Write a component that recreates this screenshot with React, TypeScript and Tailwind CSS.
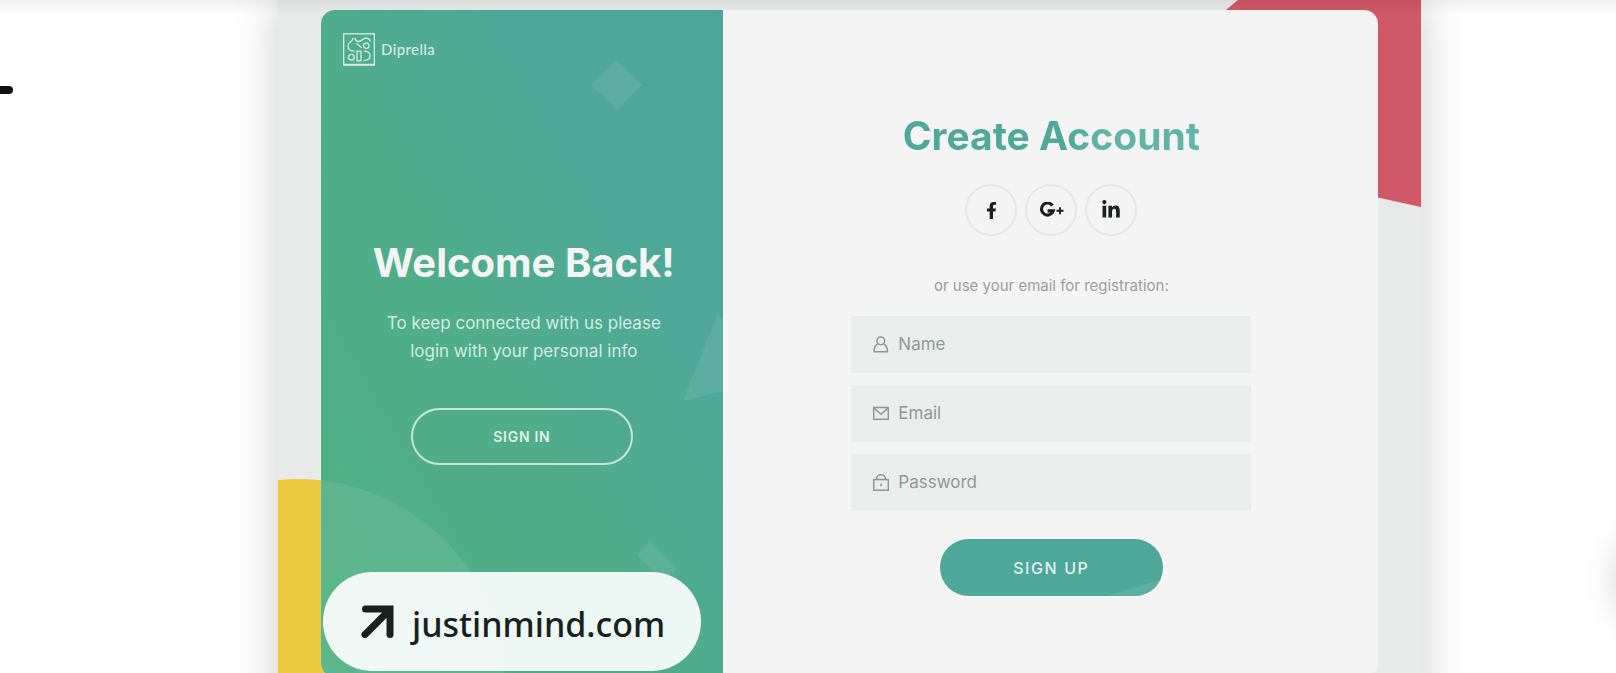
import type { ReactNode } from "react";
import { FaFacebookF, FaLinkedinIn } from "react-icons/fa";

function LogoMark() {
  return (
    <svg viewBox="0 0 96 98" className="h-[33px] w-8" fill="none" stroke="#d3ece2" strokeWidth="4" aria-hidden="true">
      <rect x="2" y="2" width="92" height="94" />
      <path d="M2 94H94" strokeWidth="5" />
      <path d="M30 14C31 26 16 25 15 38C14 50 24 54 35 54" />
      <path d="M36 14C38 28 51 27 58 20C66 12 80 12 82 25" />
      <path d="M40 30L56 44" />
      <circle cx="70" cy="38" r="8" />
      <circle cx="25" cy="72" r="8.5" />
      <rect x="42" y="54" width="12" height="29" />
      <path d="M62 54C88 52 88 84 62 82" />
    </svg>
  );
}

function GooglePlusIcon() {
  return (
    <svg viewBox="0 0 25 16" className="h-4 w-[25px]" fill="none" stroke="#1b211f" aria-hidden="true">
      <path d="M13.4 3.6A6 6 0 1 0 14.2 8.9H8.6" strokeWidth="3.1" />
      <path d="M17.5 8.8H24.5M21 5.3V12.3" strokeWidth="1.9" />
    </svg>
  );
}

function UserIcon() {
  return (
    <svg viewBox="0 0 16 18" className="h-[18px] w-4" fill="none" stroke="#8f9693" strokeWidth="1.5" aria-hidden="true">
      <circle cx="7.8" cy="4.8" r="3.9" />
      <path d="M5 7.800C2.2 9.200 1 11.600 1 15.700H14.500C14.500 11.600 13.300 9.200 10.600 7.800" strokeLinejoin="round" />
    </svg>
  );
}

function MailIcon() {
  return (
    <svg viewBox="0 0 16 18" className="h-[18px] w-4" fill="none" stroke="#8f9693" strokeWidth="1.5" aria-hidden="true">
      <rect x="0.700" y="2.500" width="14.600" height="11.800" />
      <path d="M1 3.100L8 9.300L15 3.100" />
    </svg>
  );
}

function LockIcon() {
  return (
    <svg viewBox="0 0 16 18" className="h-[18px] w-4" fill="none" stroke="#8f9693" strokeWidth="1.5" aria-hidden="true">
      <rect x="0.700" y="5.600" width="14.600" height="10.600" />
      <path d="M3.500 5.600V5A4.500 4.200 0 0 1 12.500 5V5.600" />
      <path d="M8 9.500V12.200" />
    </svg>
  );
}

function SocialButton({ label, children }: { label: string; children: ReactNode }) {
  return (
    <button
      type="button"
      aria-label={label}
      className="flex size-[52px] items-center justify-center rounded-full border-2 border-[#e3e7e5] text-[#1b211f]"
    >
      {children}
    </button>
  );
}

function Field({ id, label, type, icon }: { id: string; label: string; type: string; icon: ReactNode }) {
  return (
    <label htmlFor={id} className="flex h-[57px] items-center gap-[9px] bg-[#e9eeec] px-[22px]">
      {icon}
      <input
        id={id}
        type={type}
        placeholder={label}
        aria-label={label}
        className="min-w-0 flex-1 bg-transparent text-[17px] text-[#6d7471] outline-none placeholder:text-[#929896]"
      />
    </label>
  );
}

function WelcomePanel() {
  return (
    <section className="relative flex w-[38%] flex-col overflow-hidden rounded-l-[14px] bg-[linear-gradient(60deg,#50b182_0%,#4fad8b_45%,#4ea799_75%,#4ea59d_100%)] text-[#f4f4f4]">
      <svg className="absolute inset-0 h-full w-full" aria-hidden="true" fill="#ffffff" fillOpacity="0.08">
        <path d="M296 50L321 75L296 100L270 75Z" />
        <path d="M362 391L397 303L440 372Z" />
        <path d="M329 532L356 559L343 572L316 545Z" />
      </svg>
      <svg className="absolute bottom-0 left-0 h-[200px] w-[200px]" aria-hidden="true">
        <circle cx="-23" cy="209" r="207" fill="#ffffff" fillOpacity="0.08" />
      </svg>
      <header className="relative flex items-center gap-[6px] px-[22px] pt-[23px]">
        <LogoMark />
        <span className="pb-0.5 font-[Lato,sans-serif] text-[15px] leading-5 font-medium tracking-wide text-[#d3ece2]">Diprella</span>
      </header>
      <div className="relative flex flex-col items-center pt-[172px] pl-1 text-center">
        <h2 className="text-[40px] leading-[50px] font-bold whitespace-nowrap">Welcome Back!</h2>
        <p className="mt-[21px] text-[17px] leading-7 text-[#d3ebe1]">
          To keep connected with us please
          <br />
          login with your personal info
        </p>
        <button
          type="button"
          className="mt-[43px] mr-1 h-[57px] w-[222px] rounded-full border-2 border-[#c6e5d8] text-sm font-semibold tracking-wider text-[#e0f1ea]"
        >
          SIGN IN
        </button>
      </div>
    </section>
  );
}

function RegisterPanel() {
  return (
    <section className="flex flex-1 flex-col items-center pt-[101px] pl-0.5">
      <h1 className="bg-[linear-gradient(75deg,#4ea998_54%,#60b5a5_66%)] bg-clip-text text-[39px] leading-[50px] font-bold text-transparent">
        Create Account
      </h1>
      <div className="mt-[23px] flex gap-2">
        <SocialButton label="Facebook">
          <FaFacebookF className="size-[17px]" />
        </SocialButton>
        <SocialButton label="Google Plus">
          <GooglePlusIcon />
        </SocialButton>
        <SocialButton label="LinkedIn">
          <FaLinkedinIn className="size-5" />
        </SocialButton>
      </div>
      <p className="mt-[40px] text-[15px] leading-5 text-[#9a9f9d]">or use your email for registration:</p>
      <form className="mt-5 flex w-[400px] flex-col gap-3" onSubmit={(e) => e.preventDefault()}>
        <Field id="name" label="Name" type="text" icon={<UserIcon />} />
        <Field id="email" label="Email" type="email" icon={<MailIcon />} />
        <Field id="password" label="Password" type="password" icon={<LockIcon />} />
        <button
          type="submit"
          className="relative mt-4 h-[57px] w-[223px] self-center overflow-hidden rounded-full bg-[#4ea899] text-base font-medium tracking-widest text-[#e3f2ee]"
        >
          <svg className="absolute right-0 bottom-0 h-5 w-16" viewBox="0 0 64 20" aria-hidden="true">
            <path d="M7 20L64 3V20Z" fill="#5cb0a1" />
          </svg>
          <span className="relative">SIGN UP</span>
        </button>
      </form>
    </section>
  );
}

export default function App() {
  return (
    <main className="relative flex h-screen overflow-hidden bg-white pr-[195px] pl-[278px] font-[Inter,sans-serif]">
      <span className="absolute top-[86px] left-0 h-2 w-[13px] rounded-r-full bg-[#111111]" />
      <div className="relative min-h-[760px] flex-1 bg-[#e7eae8] px-[43px] pt-[10px] shadow-[0_0_42px_rgba(0,0,0,0.21)]">
        <svg className="absolute top-0 right-0 h-[210px] w-[200px]" viewBox="0 0 200 210" aria-hidden="true">
          <path d="M17 0H200V207L100 185L0 14Z" fill="#d15866" />
        </svg>
        <svg className="absolute top-[478px] left-0 h-[260px] w-[240px]" viewBox="0 0 240 260" aria-hidden="true">
          <circle cx="20" cy="208" r="207" fill="#edc93f" />
        </svg>
        <article className="relative flex min-h-[667px] rounded-[14px] bg-[#f4f4f4]">
          <WelcomePanel />
          <RegisterPanel />
        </article>
        <a
          href="https://www.justinmind.com"
          className="absolute top-[572px] left-[45px] flex h-[99px] w-[378px] items-center gap-[18px] rounded-full bg-white/90 pl-[37px] font-['Noto_Sans',sans-serif] text-[34px] leading-none font-medium text-[#19211e]"
        >
          <svg viewBox="0 0 34 34" className="size-[34px]" fill="none" stroke="currentColor" strokeWidth="7" strokeLinecap="round" aria-hidden="true">
            <path d="M5.500 4H30V29.500M5 29.500L29 5.500" />
          </svg>
          <span className="pt-1">justinmind.com</span>
        </a>
      </div>
      <div className="pointer-events-none absolute inset-x-0 top-0 h-[14px] bg-linear-to-b from-black/6 to-transparent" />
      <div className="absolute top-[532px] -right-[99px] size-24 rounded-full bg-white shadow-[0_0_36px_rgba(0,0,0,0.22)]" />
    </main>
  );
}
